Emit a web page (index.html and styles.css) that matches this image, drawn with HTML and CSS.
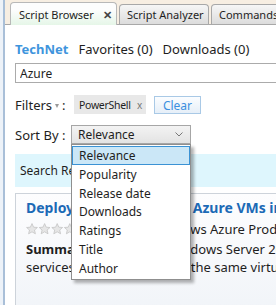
FILE: index.html
```html
<!DOCTYPE html>
<html lang="en">
<head>
    <meta charset="UTF-8">
    <meta name="viewport" content="width=device-width, initial-scale=1.0">
    <title>Script Browser</title>
    <link rel="stylesheet" href="styles.css">
</head>
<body>
    <div class="frame">
        <div class="tabs">
            <div class="tab active">Script Browser <span class="close">&#x2715;</span></div>
            <div class="tab">Script Analyzer</div>
            <div class="tab">Commands</div>
        </div>

        <div class="panel">
            <div class="sources">
                <span class="source on">TechNet</span>
                <span class="source">Favorites (0)</span>
                <span class="source">Downloads (0)</span>
            </div>

            <input type="text" class="search" value="Azure">

            <div class="row">
                <span class="label">Filters <span class="tri"></span> :</span>
                <span class="chip">PowerShell <span class="chip-x">x</span></span>
                <button type="button" class="clear">Clear</button>
            </div>

            <div class="row sort-row">
                <span class="label">Sort By :</span>
                <div class="select">
                    <span>Relevance</span>
                    <svg class="chevron" width="8" height="5" viewBox="0 0 8 5">
                        <polyline points="0.5,0.5 4,4 7.5,0.5" fill="none" stroke="#777" stroke-width="1"/>
                    </svg>
                    <ul class="options">
                        <li class="selected">Relevance</li>
                        <li>Popularity</li>
                        <li>Release date</li>
                        <li>Downloads</li>
                        <li>Ratings</li>
                        <li>Title</li>
                        <li>Author</li>
                    </ul>
                </div>
            </div>

            <div class="results-bar">Search Results (20)</div>

            <div class="card">
                <div class="card-title">Deploy Windows app to Azure VMs in bulk</div>
                <div class="card-meta">
                    <span class="stars">
                        <svg width="64" height="12" viewBox="0 0 64 12">
                            <g fill="#e6e6e6" stroke="#c4c4c4" stroke-width="0.8">
                                <polygon points="6,0.6 7.6,4.2 11.4,4.5 8.5,7 9.4,10.8 6,8.8 2.6,10.8 3.5,7 0.6,4.5 4.4,4.2"/>
                                <polygon transform="translate(12.6 0)" points="6,0.6 7.6,4.2 11.4,4.5 8.5,7 9.4,10.8 6,8.8 2.6,10.8 3.5,7 0.6,4.5 4.4,4.2"/>
                                <polygon transform="translate(25.2 0)" points="6,0.6 7.6,4.2 11.4,4.5 8.5,7 9.4,10.8 6,8.8 2.6,10.8 3.5,7 0.6,4.5 4.4,4.2"/>
                                <polygon transform="translate(37.8 0)" points="6,0.6 7.6,4.2 11.4,4.5 8.5,7 9.4,10.8 6,8.8 2.6,10.8 3.5,7 0.6,4.5 4.4,4.2"/>
                                <polygon transform="translate(50.4 0)" points="6,0.6 7.6,4.2 11.4,4.5 8.5,7 9.4,10.8 6,8.8 2.6,10.8 3.5,7 0.6,4.5 4.4,4.2"/>
                            </g>
                        </svg>
                    </span>
                    <span class="category">(0) | Windows Azure Products</span>
                </div>
                <div class="card-summary">
                    <b>Summary:</b> Deploys six Windows Server 2012 R2 VMs<br>
                    services and place them in the same virtual network.
                </div>
            </div>
        </div>
    </div>
</body>
</html>
```

FILE: styles.css
```css
body {
    margin: 0;
    width: 276px;
    height: 305px;
    overflow: hidden;
    background-color: #edf2f8;
    font-family: "Noto Sans", "Open Sans", sans-serif;
    color: #1e1e1e;
}

.frame {
    width: 330px;
    height: 305px;
    margin-left: 3px;
    border-left: 2px solid #a9bfd8;
    background-color: #fff;
}

/* tab strip */
.tabs {
    display: flex;
    align-items: flex-end;
    height: 25px;
    padding-left: 5px;
    background-color: #f7eee2;
    border-bottom: 1px solid #a8a8a8;
    box-sizing: border-box;
}

.tab {
    flex-shrink: 0;
    height: 20px;
    margin-right: 2px;
    padding: 0 7px;
    display: flex;
    align-items: center;
    white-space: nowrap;
    font-size: 11px;
    color: #1e1e1e;
    border: 1px solid #a8a8a8;
    border-bottom: none;
    border-radius: 4px 4px 0 0;
    background: linear-gradient(#f6f6f6, #dcdcdc);
    box-sizing: border-box;
}

.tab.active {
    width: 107px;
    height: 23px;
    padding-left: 8px;
    border-color: #b8b8b8;
    background: linear-gradient(#fdfdfd 30%, #e6f6e8);
    margin-bottom: -1px;
}

.tab:nth-child(2) {
    width: 90px;
}

.close {
    margin-left: 9px;
    font-size: 11px;
    font-weight: bold;
    color: #444;
}

/* panel */
.panel {
    padding: 14px 0 0 10px;
}

.sources {
    display: flex;
    font-size: 13px;
    line-height: 20px;
}

.source {
    margin-right: 10px;
}

.source.on {
    color: #3f95dd;
    font-weight: bold;
}

.search {
    display: block;
    width: 100%;
    height: 20px;
    margin: 4px 0 0;
    padding: 0 4px;
    box-sizing: border-box;
    border: 1px solid #ababab;
    font-family: inherit;
    font-size: 12px;
    color: #1e1e1e;
}

.row {
    display: flex;
    align-items: center;
    height: 19px;
    margin-top: 12px;
    font-size: 13px;
}

.label {
    width: 59px;
    display: flex;
    align-items: center;
}

.tri {
    display: inline-block;
    width: 0;
    height: 0;
    margin: 2px 3px 0 3px;
    border-left: 2.5px solid transparent;
    border-right: 2.5px solid transparent;
    border-top: 4px solid #999;
}

.chip {
    width: 72px;
    height: 19px;
    padding: 0 4px 0 5px;
    box-sizing: border-box;
    display: flex;
    align-items: center;
    justify-content: space-between;
    background-color: #e8e8e8;
    font-size: 10.5px;
    letter-spacing: -0.3px;
}

.chip-x {
    color: #777;
    font-size: 10px;
}

.clear {
    width: 47px;
    height: 18px;
    margin: 0 0 0 8px;
    padding: 0;
    border: 1px solid #a9c9e6;
    background: linear-gradient(#fbfdff, #e6eff8);
    color: #3b8fe0;
    font-family: inherit;
    font-size: 12px;
}

.sort-row {
    margin-top: 11px;
}

.sort-row .label {
    width: 56px;
}

.select {
    position: relative;
    width: 120px;
    height: 19px;
    box-sizing: border-box;
    padding: 0 7px 0 6px;
    display: flex;
    align-items: center;
    justify-content: space-between;
    border: 1px solid #a6a6a6;
    background: linear-gradient(#f3f3f3, #e3e3e3);
    font-size: 12px;
}

.options {
    position: absolute;
    top: 18px;
    left: -1px;
    width: 120px;
    box-sizing: border-box;
    margin: 0;
    padding: 1px 0 2px;
    list-style: none;
    background-color: #fff;
    border: 1px solid #8f8f8f;
    box-shadow: 3px 3px 3px rgba(0, 0, 0, 0.3);
    z-index: 10;
}

.options li {
    height: 18.75px;
    line-height: 17px;
    padding: 0 6px;
    box-sizing: border-box;
    border: 1px solid transparent;
}

.options li.selected {
    background-color: #cbe7f7;
    border-color: #3b92d4;
}

.results-bar {
    margin-top: 10px;
    height: 33px;
    padding-left: 5px;
    display: flex;
    align-items: center;
    background-color: #def6fd;
    font-size: 12px;
}

.card {
    margin-top: 6px;
    height: 140px;
    padding: 4px 10px;
    border: 1px solid #cdd3da;
    background: linear-gradient(#fdfdfe, #eef2f7);
    font-size: 13px;
}

.card-title {
    color: #1c6ab6;
    font-weight: bold;
    font-size: 14px;
    line-height: 20px;
    white-space: nowrap;
}

.card-meta {
    display: flex;
    align-items: center;
    height: 22px;
    white-space: nowrap;
}

.stars {
    display: flex;
}

.category {
    margin-left: 32px;
}

.card-summary {
    line-height: 18px;
    white-space: nowrap;
}
```
